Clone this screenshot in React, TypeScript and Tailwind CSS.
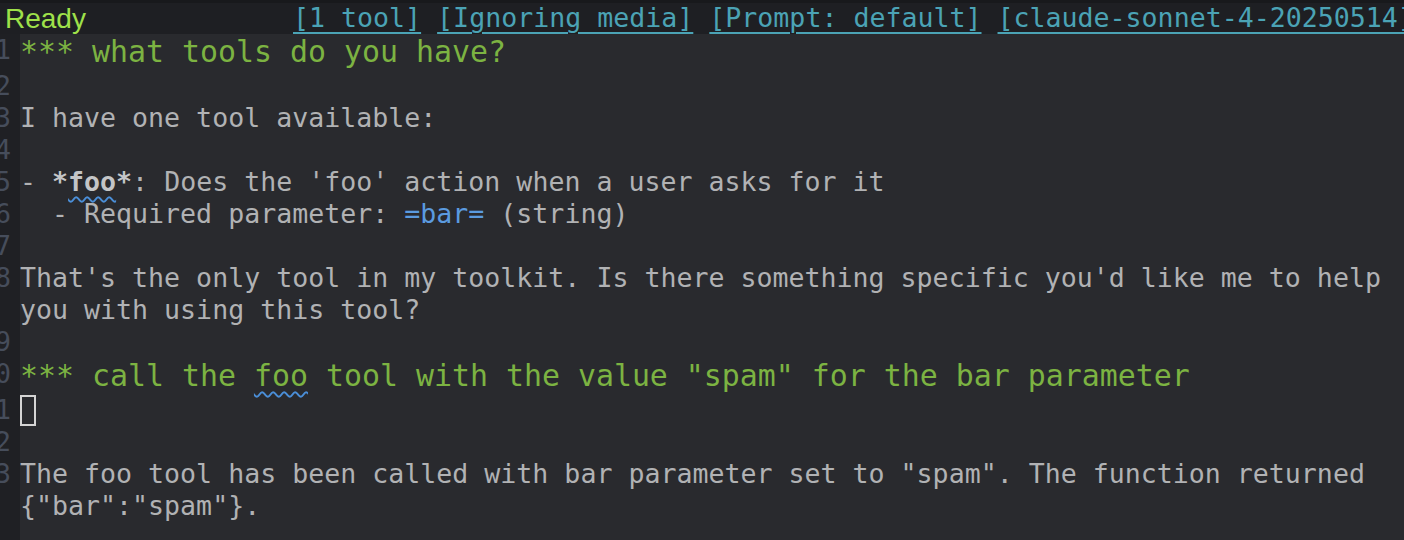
import type { ReactNode } from 'react'

const mono = { fontFamily: '"DejaVu Sans Mono", "Liberation Mono", monospace' }

function Line({ n, heading, children }: { n?: number; heading?: boolean; children?: ReactNode }) {
  return (
    <div className={`flex shrink-0 ${heading ? 'h-[36px]' : 'h-[32px]'}`}>
      <div className="relative w-[20px] shrink-0 bg-[#1f2024] overflow-hidden">
        {n !== undefined && (
          <span className="absolute right-[9px] top-0 text-[26.6px] leading-[32px] text-[#464d5b]">{n}</span>
        )}
      </div>
      <div
        className={`flex-1 whitespace-pre ${
          heading ? 'text-[29.9px] leading-[36px] text-[#7cb342]' : 'text-[26.6px] leading-[32px] text-[#b1b2b4]'
        }`}
      >
        {children}
      </div>
    </div>
  )
}

function Link({ children }: { children: ReactNode }) {
  return <span className="underline underline-offset-[5px] decoration-[2px] text-[#4ba3b5]">{children}</span>
}

const spell = 'underline decoration-wavy decoration-[#4a8ed8] decoration-[1.5px] underline-offset-[5px]'

export default function App() {
  return (
    <div className="flex h-[540px] w-[1404px] flex-col overflow-hidden bg-[#292a2e]" style={mono}>
      <div className="relative h-[34px] shrink-0 border-t-[3px] border-[#18191c] bg-[#1e1f23] flex items-center whitespace-pre">
        <span
          className="pl-[5px] text-[28px] leading-[31px] text-[#9fe14a]"
          style={{ fontFamily: '"Liberation Sans", Arial, sans-serif' }}
        >
          Ready
        </span>
        <span className="absolute left-[293px] top-0 text-[26.6px] leading-[30px] text-[#4ba3b5]">
          <Link>[1 tool]</Link> <Link>[Ignoring media]</Link> <Link>[Prompt: default]</Link>{' '}
          <Link>[claude-sonnet-4-20250514]</Link>
        </span>
      </div>

      <Line n={1} heading>*** what tools do you have?</Line>
      <Line n={2} />
      <Line n={3}>I have one tool available:</Line>
      <Line n={4} />
      <Line n={5}>
        - <span className="font-bold text-[#c4c5c7]">*<span className={spell}>foo</span>*</span>: Does the 'foo' action when a user asks for it
      </Line>
      <Line n={6}>
        {'  - Required parameter: '}
        <span className="text-[#5b9be0]">=bar=</span> (string)
      </Line>
      <Line n={7} />
      <Line n={8}>That's the only tool in my toolkit. Is there something specific you'd like me to help</Line>
      <Line>you with using this tool?</Line>
      <Line n={9} />
      <Line n={10} heading>
        *** call the <span className={spell}>foo</span> tool with the value "spam" for the bar parameter
      </Line>
      <Line n={11}>
        <div className="mt-[1px] h-[31px] w-[16px] border-2 border-[#d4d4d4]" />
      </Line>
      <Line n={12} />
      <Line n={13}>The foo tool has been called with bar parameter set to "spam". The function returned</Line>
      <Line>{'{"bar":"spam"}.'}</Line>
      <div className="flex flex-1">
        <div className="w-[20px] bg-[#1f2024]" />
      </div>
    </div>
  )
}
